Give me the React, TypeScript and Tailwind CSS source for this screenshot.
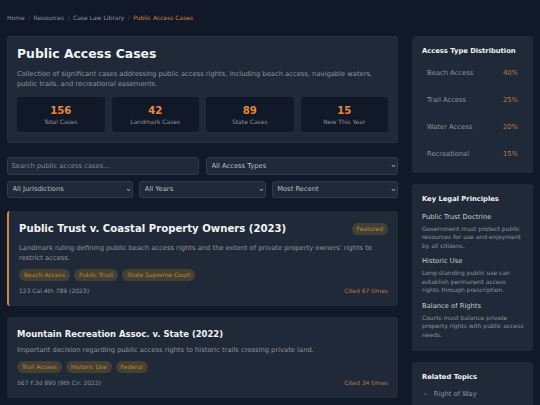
import { ChevronDown } from "lucide-react";

const font = "font-['DejaVu_Sans',sans-serif]";

const stats = [
  { value: "156", label: "Total Cases" },
  { value: "42", label: "Landmark Cases" },
  { value: "89", label: "State Cases" },
  { value: "15", label: "New This Year" },
];

const distribution = [
  { label: "Beach Access", pct: "40%" },
  { label: "Trail Access", pct: "25%" },
  { label: "Water Access", pct: "20%" },
  { label: "Recreational", pct: "15%" },
];

const principles = [
  { title: "Public Trust Doctrine", text: "Government must protect public resources for use and enjoyment by all citizens." },
  { title: "Historic Use", text: "Long-standing public use can establish permanent access rights through prescription." },
  { title: "Balance of Rights", text: "Courts must balance private property rights with public access needs." },
];

const Tag = ({ children }: any) => (
  <span className="h-[12px] px-[5px] rounded-full bg-[#d69e2e]/20 text-[#c08a28] text-[6px] leading-[12px]">{children}</span>
);

const Dropdown = ({ label, className }: any) => (
  <div className={`relative ${className}`}>
    <select className="block w-full h-full appearance-none bg-[#1f2937] border border-[#2f3b4c] rounded-[3px] pl-[4.5px] text-[#b9bec7] text-[6.75px] outline-none">
      <option>{label}</option>
    </select>
    <ChevronDown className="absolute right-[2px] top-1/2 -translate-y-1/2 w-[5px] h-[5px] text-[#e5e7eb] pointer-events-none" strokeWidth={4} />
  </div>
);

export default function App() {
  return (
    <main className={`h-screen overflow-hidden bg-[#111827] text-[#f3f4f6] px-[7px] antialiased ${font}`}>
      {/* breadcrumb */}
      <nav className="h-[36px] flex items-center gap-[3.4px] text-[6px] text-[#8f949d] pb-[1px]">
        <span>Home</span>
        <span className="text-[#4b5563]">/</span>
        <span>Resources</span>
        <span className="text-[#4b5563]">/</span>
        <span>Case Law Library</span>
        <span className="text-[#4b5563]">/</span>
        <span className="text-[#d08648]">Public Access Cases</span>
      </nav>

      <div className="flex gap-[14px] items-start">
        {/* main column */}
        <section className="flex-1 min-w-0">
          <div className="h-[107px] bg-[#1f2937] border border-[#2f3b4c]/40 rounded-[3px] px-[9px] pt-[7px]">
            <h1 className="text-[12.4px] leading-[20px] font-bold">Public Access Cases</h1>
            <p className="mt-[4.5px] text-[6.75px] leading-[10px] text-[#8f949d]">
              Collection of significant cases addressing public access rights, including beach access, navigable waters, public trails, and recreational easements.
            </p>
            <div className="mt-[8.5px] grid grid-cols-4 gap-[7px]">
              {stats.map((s) => (
                <div key={s.label} className="h-[35px] bg-[#111827] rounded-[3px] flex flex-col items-center justify-center">
                  <div className="text-[10.1px] leading-[13px] font-bold text-[#ed8936]">{s.value}</div>
                  <div className="text-[6px] leading-[9px] text-[#8f949d]">{s.label}</div>
                </div>
              ))}
            </div>
          </div>

          {/* filters */}
          <div className="mt-[14px] flex gap-[7px]">
            <input
              placeholder="Search public access cases..."
              className="w-[192px] h-[18px] bg-[#1f2937] border border-[#2f3b4c] rounded-[3px] px-[3.5px] text-[6.75px] placeholder:text-[#80858f] outline-none"
            />
            <Dropdown label="All Access Types" className="flex-1 h-[18px]" />
          </div>
          <div className="mt-[6px] grid grid-cols-3 gap-[6px]">
            <Dropdown label="All Jurisdictions" className="h-[17px]" />
            <Dropdown label="All Years" className="h-[17px]" />
            <Dropdown label="Most Recent" className="h-[17px]" />
          </div>

          {/* case cards */}
          <article className="mt-[13px] h-[95px] bg-[#1f2937] border-l-2 border-[#d08648] rounded-[3px] pl-[10px] pr-[10px] pt-[10px]">
            <div className="flex items-center justify-between">
              <h2 className="text-[10.15px] leading-[16px] font-bold">Public Trust v. Coastal Property Owners (2023)</h2>
              <span className="h-[12px] px-[5px] rounded-full bg-[#d69e2e]/20 text-[#c08a28] text-[6px] leading-[12px]">Featured</span>
            </div>
            <p className="mt-[5.5px] text-[6.75px] leading-[10px] text-[#8f949d]">
              Landmark ruling defining public beach access rights and the extent of private property owners' rights to restrict access.
            </p>
            <div className="mt-[6.5px] flex gap-[4px]">
              <Tag>Beach Access</Tag>
              <Tag>Public Trust</Tag>
              <Tag>State Supreme Court</Tag>
            </div>
            <div className="mt-[5px] flex justify-between text-[6px] leading-[9px]">
              <span className="text-[#8f949d]">123 Cal.4th 789 (2023)</span>
              <span className="text-[#b97a48]">Cited 67 times</span>
            </div>
          </article>

          <article className="mt-[11px] h-[81px] bg-[#1f2937] rounded-[3px] px-[10px] pt-[10px]">
            <h2 className="text-[8.44px] leading-[14px] font-bold">Mountain Recreation Assoc. v. State (2022)</h2>
            <p className="mt-[3.5px] text-[6.75px] leading-[10px] text-[#8f949d]">
              Important decision regarding public access rights to historic trails crossing private land.
            </p>
            <div className="mt-[6.5px] flex gap-[4px]">
              <Tag>Trail Access</Tag>
              <Tag>Historic Use</Tag>
              <Tag>Federal</Tag>
            </div>
            <div className="mt-[5px] flex justify-between text-[6px] leading-[9px]">
              <span className="text-[#8f949d]">567 F.3d 890 (9th Cir. 2022)</span>
              <span className="text-[#b97a48]">Cited 34 times</span>
            </div>
          </article>
        </section>

        {/* sidebar */}
        <aside className="w-[121px] shrink-0 flex flex-col gap-[11px]">
          <div className="h-[137px] bg-[#1f2937] rounded-[3px] px-[10px] pt-[10px]">
            <h3 className="text-[6.75px] leading-[10px] font-bold">Access Type Distribution</h3>
            <div className="mt-[12px] flex flex-col gap-[17px] pl-[5px] pr-[5px]">
              {distribution.map((d) => (
                <div key={d.label} className="flex justify-between text-[6.75px] leading-[10px]">
                  <span className="text-[#8f949d]">{d.label}</span>
                  <span className="text-[#b97a48]">{d.pct}</span>
                </div>
              ))}
            </div>
          </div>

          <div className="h-[167px] bg-[#1f2937] rounded-[3px] pl-[10px] pr-[8px] pt-[10px]">
            <h3 className="text-[6.75px] leading-[10px] font-bold">Key Legal Principles</h3>
            <div className="mt-[7.5px] flex flex-col gap-[6px]">
              {principles.map((p) => (
                <div key={p.title}>
                  <h4 className="text-[6.75px] leading-[10px] text-[#c8ccd2]">{p.title}</h4>
                  <p className="mt-[3px] text-[6px] leading-[8.5px] text-[#8f949d]">{p.text}</p>
                </div>
              ))}
            </div>
          </div>

          <div className="h-[80px] bg-[#1f2937] rounded-[3px] px-[10px] pt-[10px]">
            <h3 className="text-[6.75px] leading-[10px] font-bold">Related Topics</h3>
            <div className="mt-[7px] flex items-center gap-[7px] text-[6.75px] leading-[10px] text-[#8f949d]">
              <span className="pl-[2px]">›</span>
              <span>Right of Way</span>
            </div>
          </div>
        </aside>
      </div>
    </main>
  );
}
